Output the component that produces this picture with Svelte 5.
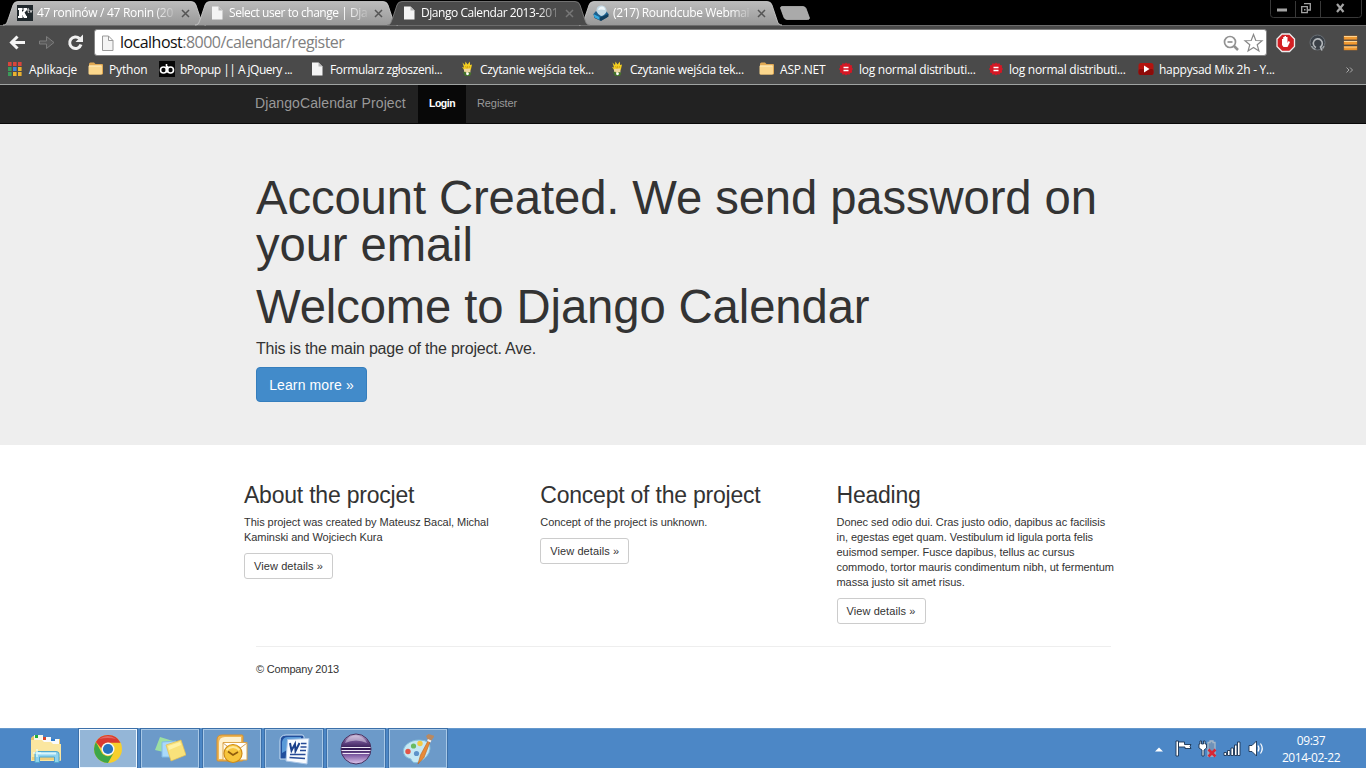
<script>
  const tabs = [
    { icon: 'ktv', title: '47 roninów / 47 Ronin (20', spacing: -0.3 },
    { icon: 'page', title: 'Select user to change | Dja', spacing: -0.45 },
    { icon: 'page', title: 'Django Calendar 2013-201', active: true, spacing: -0.45 },
    { icon: 'cube', title: '(217) Roundcube Webmai', spacing: -0.34 },
  ];

  const bookmarks = [
    { icon: 'apps', label: 'Aplikacje', width: 80, spacing: -0.15 },
    { icon: 'folder', label: 'Python', width: 71, spacing: -0.15 },
    { icon: 'bpopup', label: 'bPopup || A jQuery ...', width: 150, spacing: -0.53 },
    { icon: 'page', label: 'Formularz zgłoszeni...', width: 150, spacing: -0.37 },
    { icon: 'hand', label: 'Czytanie wejścia tek...', width: 150, spacing: -0.29 },
    { icon: 'hand', label: 'Czytanie wejścia tek...', width: 150, spacing: -0.29 },
    { icon: 'folder', label: 'ASP.NET', width: 79, spacing: -0.2 },
    { icon: 'wolfram', label: 'log normal distributi...', width: 150, spacing: -0.27 },
    { icon: 'wolfram', label: 'log normal distributi...', width: 150, spacing: -0.27 },
    { icon: 'youtube', label: 'happysad Mix 2h - Y...', width: 150, spacing: -0.25 },
  ];

  const columns = [
    { title: 'About the procjet', text: 'This project was created by Mateusz Bacal, Michal Kaminski and Wojciech Kura' },
    { title: 'Concept of the project', text: 'Concept of the project is unknown.' },
    {
      title: 'Heading',
      text: 'Donec sed odio dui. Cras justo odio, dapibus ac facilisis in, egestas eget quam. Vestibulum id ligula porta felis euismod semper. Fusce dapibus, tellus ac cursus commodo, tortor mauris condimentum nibh, ut fermentum massa justo sit amet risus.',
    },
  ];

  const apps = ['explorer', 'chrome', 'notes', 'outlook', 'word', 'eclipse', 'paint'];
  const appColors = ['#d9453c', '#d9453c', '#d9453c', '#3c9a5a', '#3f83d8', '#e8b130', '#3c9a5a', '#e8b130', '#e8b130'];
</script>

{#snippet small(name)}
  <svg class="small" width="16" height="16" viewBox="0 0 16 16">
    {#if name === 'page'}
      <path d="M3 1.5h6.5L13.500 5.500V14.500H3z" fill="#f4f4f4" />
      <path d="M9.500 1.500V5.500H13.500z" fill="#b5b5b5" />
    {:else if name === 'ktv'}
      <rect width="16" height="16" fill="#20282c" />
      <path d="M1 3h4.500v2H5v2l2-2H6.500V3H10v2L7.500 7.500 9.500 11h.5v2H7L5 10v1h.500v2H1v-2h1V5H1z" fill="#fff" />
      <path d="M10 5h2.500M11.200 3v4.500h1M13 5l1 2.500L15 5" stroke="#ddd" fill="none" stroke-width=".9" />
    {:else if name === 'cube'}
      <path d="M.5 9L3 6h10l2.500 3-1.500 3.500-6 3-6-3z" fill="#1c5f8c" />
      <path d="M.5 9L7 12.500 15.500 9v2.500L8 16l-6.500-3z" fill="#103c5c" />
      <path d="M.5 9L6.500 12v3L1.500 12.500z" fill="#36a9e0" />
      <path d="M3.500 6.500C3 2 6 .5 8.500 .5s5.500 2 5 6.500Q11 11 8 11 5 10 3.500 6.500z" fill="#c3d8e3" />
      <path d="M5 5q1-3.500 4-3.500T12 5Q8 4 5 5z" fill="#eef6f9" />
    {:else if name === 'apps'}
      {#each appColors as color, i}
        <rect x={(i % 3) * 5} y={1 + Math.floor(i / 3) * 5} width="3.600" height="4" fill={color} />
      {/each}
    {:else if name === 'folder'}
      <path d="M1 3q0-1.500 1.500-1.500H6L7.500 3H14q1 0 1 1v8.500q0 1-1 1H2q-1 0-1-1z" fill="#e1a953" />
      <path d="M.5 5.500q0-1 1-1H13q1 0 1 1v7q0 1-1 1H1.500q-1 0-1-1z" fill="#fbd78d" />
      <path d="M1 5h12.500" stroke="#fff1c7" />
    {:else if name === 'bpopup'}
      <rect width="16" height="16" fill="#080808" />
      <g fill="none" stroke="#fff" stroke-width="1.600"><circle cx="4.500" cy="9" r="3" /><circle cx="11.500" cy="9" r="3" /><path d="M7.500 3v8.500M8.500 5v6.500" /></g>
    {:else if name === 'hand'}
      <path d="M3.500 1.500L6 4 6.500 .5 8.500 3.500 11 .5V4L13 3.500 12 8l-1 2.500H5.500L4.500 8 3 6l2 .500z" fill="#f3ce20" />
      <path d="M6.500 5l1 2.500M8.500 5v2.500M10.500 5l-.5 2.500" stroke="#c99412" stroke-width=".7" />
      <path d="M5 8l6-.5.500 4-4 2L5 11z" fill="#ecd59c" />
      <path d="M4 11.500l2 3.500h5l1.500-3L10 11l-2 1.500-2-2z" fill="#43722b" />
      <circle cx="8.500" cy="12.800" r="1.400" fill="#fff" />
    {:else if name === 'wolfram'}
      <path d="M8 2l1.500 1.200 2-.5.7 1.800 2 .6-.4 2L15 8.500l-1.200 1.400.4 2-2 .6-.7 1.800-2-.5L8 15l-1.500-1.200-2 .5-.7-1.800-2-.6.4-2L1 8.500l1.200-1.400-.4-2 2-.6.7-1.800 2 .5z" fill="#d41825" transform="translate(0 -.5)" />
      <path d="M5.500 6.500h5M5.500 9.500h5" stroke="#fff" stroke-width="1.400" />
    {:else if name === 'youtube'}
      <rect x=".5" y="2" width="15" height="12" rx="2.500" fill="#b3140f" />
      <rect x=".5" y="8" width="15" height="6" rx="2" fill="#8d0b09" />
      <path d="M6 4.500v7L11.500 8z" fill="#fff" />
    {/if}
  </svg>
{/snippet}

{#snippet large(name)}
  <svg width="32" height="32" viewBox="0 0 32 32">
    {#if name === 'explorer'}
      <path d="M1 5l2-2h8l2 3h17v22H1z" fill="#e9c668" />
      <path d="M4 2h9v6H4z" fill="#f8f6e8" /><path d="M5 2h3v3H5z" fill="#1fae3c" />
      <path d="M12 4h9v6h-9z" fill="#fafafa" /><path d="M13 4h3v3h-3z" fill="#d8452a" />
      <path d="M20 6h9v6h-9z" fill="#fafafa" /><path d="M21 6h4v2h-4z" fill="#2d7cd0" />
      <path d="M1 7h11l2 2h7l2 2h8v16q0 1-1 1H2q-1 0-1-1z" fill="#fae6a0" />
      <path d="M2 24h28v3H2z" fill="#efce79" />
      <path d="M5 29.500V21q0-2.500 3-2.500h18q3 0 3 2.500v8.500h-4.500V24h-15v5.500z" fill="#8fd3ee" stroke="#51a7cd" />
      <path d="M8 20.500h18" stroke="#d9f4fb" stroke-width="2" />
      <path d="M7 16v8M3 20h8" stroke="#eaffff" stroke-width="1.200" />
    {:else if name === 'chrome'}
      <circle cx="16" cy="16" r="14" fill="#f7cf2c" />
      <path d="M3.900 9l5.700 10.500a7 7 0 0 0 12 .5L16 30A14 14 0 0 1 3.900 9z" fill="#3da648" />
      <path d="M3.900 9A14 14 0 0 1 28.500 9.700H16a6.500 6.500 0 0 0-6.500 5.800z" fill="#d93a31" />
      <circle cx="16" cy="16" r="6.500" fill="#f5f8fa" />
      <circle cx="16" cy="16" r="5.100" fill="#2773bd" />
      <path d="M7 6q9-6 17 0-8-2-17 0" fill="#fff" opacity=".25" />
    {:else if name === 'notes'}
      <path d="M6 4l13 4-5 12L1 17z" fill="#9de0a2" />
      <path d="M8 9l14-1 1 16H8z" fill="#a9d9fa" stroke="#80bce8" />
      <path d="M12 12l15-5 5 15-15 6z" fill="#f9e27b" stroke="#e3bd51" stroke-width=".7" />
      <path d="M14 13l12-4 1 3-12 5z" fill="#fff2a5" />
    {:else if name === 'outlook'}
      <path d="M1 7q0-5 5-5h20q1 0 1 1v24q0 1-1 1H2q-1 0-1-1z" fill="#efb756" stroke="#d98f28" />
      <path d="M3 10q0-6 6-6h16v22H3z" fill="#fff1cf" />
      <path d="M7 9.500h24V27H7z" fill="#fffdf3" stroke="#dda549" />
      <path d="M7 10l12 9L31 10" fill="#fff" stroke="#d5a35a" />
      <circle cx="17" cy="20.500" r="9" fill="#f7c53c" stroke="#cf8b16" stroke-width="1.200" />
      <path d="M10.500 17q6.500-6 13 0" fill="none" stroke="#ffe796" stroke-width="2" />
      <path d="M12 18.500l5 3.500 5-3" fill="none" stroke="#8f5c0d" stroke-width="1.700" />
    {:else if name === 'word'}
      <path d="M2 8q0-6 6-6h16q2 0 2 2v20q0 2-2 2H2z" fill="#214f9d" stroke="#c6dcf2" />
      <path d="M4 9q1-5 6-5h13v5L4 20z" fill="#5a9ad8" />
      <path d="M9.500 6.500L31 5.500 29 31 8 28z" fill="#f8fbff" stroke="#aac6e7" />
      <path d="M12 10l1.500 7.500L17 11l.5 7L21.500 10" fill="none" stroke="#193f8b" stroke-width="2" />
      <path d="M23 10.500h5.500M22.500 14h6M22 17.500h6M12 21.500h15.500M11.500 24.500l15.500 1" stroke="#274b97" stroke-width="1.500" />
    {:else if name === 'eclipse'}
      <defs><linearGradient id="eclipseFill" x2="0" y2="1"><stop stop-color="#cbb9d8" /><stop offset=".25" stop-color="#6c4d8c" /><stop offset=".5" stop-color="#2f1650" /><stop offset=".7" stop-color="#7f5ca4" /><stop offset="1" stop-color="#e0c8ee" /></linearGradient></defs>
      <circle cx="16" cy="16" r="15" fill="url(#eclipseFill)" stroke="#47305f" />
      <path d="M1.500 14.500h29M1.500 17.500h29M2.500 20.500h27" stroke="#efe8f8" stroke-width="1.200" />
      <path d="M5 10q3-8 11-7.500T27 10q-11-5-22 0z" fill="#e6dcf0" opacity=".5" />
    {:else if name === 'paint'}
      <path d="M1.500 20C0 13 8 7 17 7q12 0 11 9-1 8-11 13-5 2-7-1-1-3-4-3-3-1-4.500-5z" fill="#c5e8f4" stroke="#82bddb" />
      <circle cx="6" cy="18.500" r="2.700" fill="#e35648" /><circle cx="11.500" cy="13" r="2.600" fill="#69bb62" />
      <circle cx="18" cy="10.500" r="2.700" fill="#f2ca46" />
      <circle cx="14.500" cy="20.500" r="2.600" fill="#5d93c9" />
      <path d="M16 31l2.500-9L26 8l2 1-6 15.500z" fill="#e88a36" stroke="#bc6420" stroke-width=".6" />
      <path d="M26 7l-2-4 2.500-2 6 2-3.500 5z" fill="#b98961" /><path d="M25.500 7l3.500 1.500" stroke="#eee" stroke-width="2" />
    {/if}
  </svg>
{/snippet}

<div class="screen">
  <header class="browser">
    <div class="strip">
      {#each tabs as tab}
        <div class="tab" class:active={tab.active}>
          <svg class="shape" width="203" height="26" viewBox="0 0 203 26">
            <defs><linearGradient id="tabFill" x2="0" y2="1"><stop stop-color="#bcbcbc" /><stop offset="1" stop-color="#999" /></linearGradient></defs>
            <path d="M0 25C4 25 4 22 6 17L10 5Q11 1.500 15 1.500H188Q192 1.500 193 5L198 20Q199 25 203 25" fill={tab.active ? '#4b4b4b' : 'url(#tabFill)'} stroke={tab.active ? '#858585' : '#d0d0d0'} stroke-width=".8" />
          </svg>
          {@render small(tab.icon)}
          <span class="tab-title" style:letter-spacing="{tab.spacing}px">{tab.title}</span>
          <svg class="close" width="9" height="9" viewBox="0 0 9 9"><path d="M1 1l7 7M8 1L1 8" stroke={tab.active ? '#777' : '#555'} stroke-width="1.500" /></svg>
        </div>
      {/each}
      <svg class="new-tab" width="32" height="16" viewBox="0 0 32 16"><path d="M3 .5H24q2 0 3 2L30.500 12q0 1.500-2 1.500H8q-2 0-3-2L1.500 2q0-1.500 1.500-1.500z" fill="#aaa" stroke="#c0c0c0" stroke-width=".7" /></svg>
      <svg class="window-controls" width="94" height="19" viewBox="0 0 94 19">
        <path d="M.5 0V14.500q0 3 3 3H88.500q3 0 3-3V0M25.500 1V17M50.500 1V17" fill="none" stroke="#383838" />
        <rect x="7" y="8.500" width="10" height="3" fill="#a4a4a4" />
        <g stroke="#a4a4a4" stroke-width="1.500" fill="none"><path d="M31.700 6.700h5.600v6h-5.600zM34 3.700h6.300V10H38" stroke-width="1.300" /><path d="M34 9.700h1.500" stroke-width="1.500" /><path d="M67 4l6.500 8M73.500 4l-6.500 8" stroke-width="2.200" /></g>
      </svg>
    </div>

    <div class="toolbar">
      <svg width="94" height="32" viewBox="0 0 94 32">
        <path d="M25 16.500H12M17.500 10.500l-6 6 6 6" fill="none" stroke="#f4f4f4" stroke-width="3" />
        <path d="M39.500 15h7v-4.500l7.500 6-7.500 6V18h-7z" fill="#585858" stroke="#7d7d7d" />
        <path d="M79.500 12.500a5.800 5.800 0 1 0 1.500 6" fill="none" stroke="#f0f0f0" stroke-width="3" />
        <path d="M75.500 16h7.500V8.500z" fill="#f0f0f0" />
      </svg>
      <div class="address">
        <svg width="25" height="24" viewBox="0 0 25 24"><path d="M7.500 5h6l4.500 4.500V19.500H7.500zM13.500 5v4.500H18" fill="#f4f4f4" stroke="#999" /></svg>
        <span class="url"><b>localhost</b>:8000/calendar/register</span>
        <svg width="44" height="24" viewBox="0 0 44 24">
          <g fill="none" stroke="#929292" stroke-width="1.700"><circle cx="8" cy="11" r="5.500" /><path d="M5.500 11h5" /><path d="M12 15l4 4" stroke-width="2.500" /></g>
          <path d="M31.500 3.500l2.300 6 6.200.2-4.800 4 1.700 6.200-5.400-3.500-5.400 3.500 1.700-6.200-4.800-4 6.200-.2z" fill="#fff" stroke="#888" stroke-width="1.200" />
        </svg>
      </div>
      <svg width="99" height="32" viewBox="0 0 99 32">
        <path d="M15 8h7.500l5 5v7.500l-5 5H15l-5-5V13z" fill="#d32024" stroke="#eee" stroke-width="1.300" />
        <path d="M15 15v-2h1.200v3-5h1.300v4-5H19v5-4h1.500v6l1-2 1.500 1-2.500 5h-4L15 19z" fill="#fff" />
        <circle cx="50.500" cy="16.500" r="7.500" fill="#3a4047" stroke="#686e74" />
        <path d="M44.500 20a7 7 0 0 0 4 3.500M57 20a7 7 0 0 1-1.500 2.500" fill="none" stroke="#9ba0a4" stroke-width="1.500" />
        <path d="M49 21.500a4.500 4.500 0 1 1 4.500-.5l1.500 3.500" fill="none" stroke="#b4b8bb" stroke-width="1.600" />
        <g fill="#f09a32" stroke="#c97824" stroke-width=".5"><rect x="77" y="10" width="13" height="3.500" /><rect x="77" y="15" width="13" height="3.500" /><rect x="77" y="20.500" width="13" height="3.500" /></g>
        <path d="M77 10.500h13M77 15.500h13M77 21h13" stroke="#ffd490" />
      </svg>
    </div>

    <div class="bookmarks">
      {#each bookmarks as mark}
        <span class="bookmark" style:width="{mark.width}px">{@render small(mark.icon)}<span style:letter-spacing="{mark.spacing}px">{mark.label}</span></span>
      {/each}
      <svg class="more" width="8" height="8" viewBox="0 0 8 8"><path d="M.5 1.500L3 4 .5 6.500M4 1.500L6.500 4 4 6.500" fill="none" stroke="#aaa" /></svg>
    </div>
  </header>

  <main>
    <nav><span class="brand">DjangoCalendar Project</span><span class="nav-item current">Login</span><span class="nav-item">Register</span></nav>
    <section class="hero">
      <div class="inner">
        <h1>Account Created. We send password on your email</h1>
        <h1>Welcome to Django Calendar</h1>
        <p>This is the main page of the project. Ave.</p>
        <button class="primary">Learn more »</button>
      </div>
    </section>
    <section class="columns">
      {#each columns as column}
        <article><h2>{column.title}</h2><p>{column.text}</p><button class="details">View details »</button></article>
      {/each}
    </section>
    <footer>© Company 2013</footer>
  </main>

  <div class="taskbar">
    {#each apps as app, i}
      <div class="app" class:pinned={i === 0} class:focused={i === 1}>{@render large(app)}</div>
    {/each}
    <svg class="tray" width="115" height="24" viewBox="0 0 115 24">
      <path d="M2 14.500h8L6 10.500z" fill="#fff" />
      <g stroke="#1b3454" stroke-width=".9" fill="#fff">
        <path d="M23 4h2.500v15H23zM25.500 5h6v2.500H38q-2 2 0 4h-6V10h-6.500z" />
        <path d="M47 4h1.500v3h2V4H52v3h1.500v4l-2.500 2v6h-2v-6l-3-2V7h1z" />
        <path d="M55 5.500h2V4h3v1.500h2V19h-7z" fill="#6f92b8" stroke="#a6b8c8" stroke-width="1.300" />
        <path d="M71 15.500h2.500V18.500H71zM74.500 13.500H77V18.500h-2.500zM78 11h2.500v7.500H78zM81.500 8H84v10.500h-2.500zM84.500 5H87v13.500h-2.500z" />
        <path d="M96 8.500h3l4.500-4.500v15L99 14.500h-3z" />
      </g>
      <path d="M55.500 12.500l7 7M62.500 12.500l-7 7" stroke="#d92735" stroke-width="2.500" />
      <path d="M105 8.500q2 3 0 6M107.500 6.500q3.500 5 0 10" fill="none" stroke="#fff" stroke-width="1.200" />
    </svg>
    <div class="clock"><span>09:37</span><span>2014-02-22</span></div>
  </div>
</div>

<style>
  :global(body) { overflow: hidden; background: #fff; }
  .screen { width: 1366px; height: 768px; display: flex; flex-direction: column; overflow: hidden; font-family: "Liberation Sans", Arial, sans-serif; color: #333; }
  svg { display: block; flex: none; }
  .browser { height: 85px; flex: none; box-sizing: border-box; background: #4a4a4a; border-bottom: 1px solid #a0a3a2; font-family: "Open Sans", sans-serif; }
  .strip { height: 25px; background: #000; display: flex; padding-left: 3px; border-bottom: 1px solid #6c6c6c; }
  .tab { position: relative; box-sizing: border-box; width: 192px; height: 26px; padding: 0 5px 0 14px; display: flex; align-items: center; flex: none; }
  .tab.active { z-index: 2; }
  .tab .shape { position: absolute; left: 0; top: 0; }
  .tab > :global(.small), .tab-title, .close { position: relative; }
  .tab-title { width: 138px; margin-left: 4px; font-size: 12px; line-height: 20px; color: #fff; white-space: nowrap; mask-image: linear-gradient(90deg, #000 85%, #0003); }
  .close { margin-left: 7px; }
  .new-tab { margin: 6px 0 0 8px; }
  .window-controls { margin-left: auto; margin-right: 2px; }
  .toolbar { display: flex; height: 32px; align-items: center; }
  .address { flex: 1; box-sizing: border-box; height: 27px; margin-top: 1px; border: 1px solid #858585; border-radius: 3px; background: #fff; display: flex; align-items: center; }
  .url { flex: 1; font-size: 16px; line-height: 22px; padding-bottom: 1px; letter-spacing: -.53px; color: #808080; white-space: nowrap; }
  .url b { font-weight: 400; color: #111; }
  .bookmarks { display: flex; align-items: center; height: 24px; padding-left: 8px; margin-top: -1px; }
  .bookmark { display: flex; align-items: center; gap: 5px; flex: none; color: #fff; font-size: 12px; white-space: nowrap; }
  .more { margin: 2px 0 0 58px; }
  main { flex: 1; background: #fff; }
  nav { height: 38px; border-bottom: 1px solid #080808; background: #222; display: flex; padding-left: 255px; align-items: stretch; color: #999; font-size: 11px; line-height: 37px; }
  .brand { width: 163px; font-size: 14px; letter-spacing: .1px; }
  .nav-item { padding: 0 11px; letter-spacing: -.1px; }
  .current { width: 26px; background: #080808; color: #fff; font-size: 10.5px; font-weight: 700; letter-spacing: -.5px; }
  .hero { height: 321px; box-sizing: border-box; background: #eee; padding-top: 50px; }
  .inner { width: 855px; margin-left: 256px; }
  h1 { margin: 0 0 15px; font-size: 47.250px; line-height: 47px; font-weight: 400; letter-spacing: -.11px; }
  h1 + h1 { margin-bottom: 7px; }
  .hero p { margin: 0 0 7px; font-size: 16px; line-height: 23px; letter-spacing: -.21px; }
  button { display: block; font-family: inherit; box-sizing: border-box; padding: 0; border-radius: 3px; }
  .primary { width: 111px; height: 35px; border: 1px solid #357ebd; background: #428bca; color: #fff; font-size: 14px; border-radius: 4px; letter-spacing: .12px; }
  .columns { display: grid; grid-template-columns: repeat(3, 276px); column-gap: 20.250px; padding: 37px 0 0 244px; height: 164px; }
  h2 { margin: 0; font-size: 23px; line-height: 26px; font-weight: 400; letter-spacing: -.22px; }
  .columns p { margin: 7px -5px 8px 0; font-size: 11px; line-height: 15px; letter-spacing: -.05px; }
  .details { width: 89px; height: 26px; background: #fff; border: 1px solid #ccc; color: #333; font-size: 11px; letter-spacing: .1px; }
  footer { margin-left: 256px; width: 855px; border-top: 1px solid #eee; padding-top: 15px; font-size: 11px; line-height: 15px; letter-spacing: -.2px; }
  .taskbar { height: 40px; flex: none; display: flex; align-items: center; box-sizing: border-box; padding-left: 17px; background: #4c87c6; border-top: 1px solid #6598cc; }
  .app { width: 58px; height: 39px; box-sizing: border-box; flex: none; margin-right: 4px; padding-right: 1px; display: grid; place-items: center; background: #6c9ac9; border: 1px solid #a8c8e6; box-shadow: 0 0 0 1px #3c70a9; }
  .pinned { background: none; border-color: transparent; box-shadow: none; }
  .focused { background: #94b6d7; border: 1px solid #eef7ff; }
  .tray { margin-left: auto; }
  .clock { width: 78px; margin-left: 4px; margin-right: 16px; display: flex; flex-direction: column; align-items: center; color: #fff; font: 12px/17px "Open Sans", sans-serif; letter-spacing: -.45px; }
</style>
